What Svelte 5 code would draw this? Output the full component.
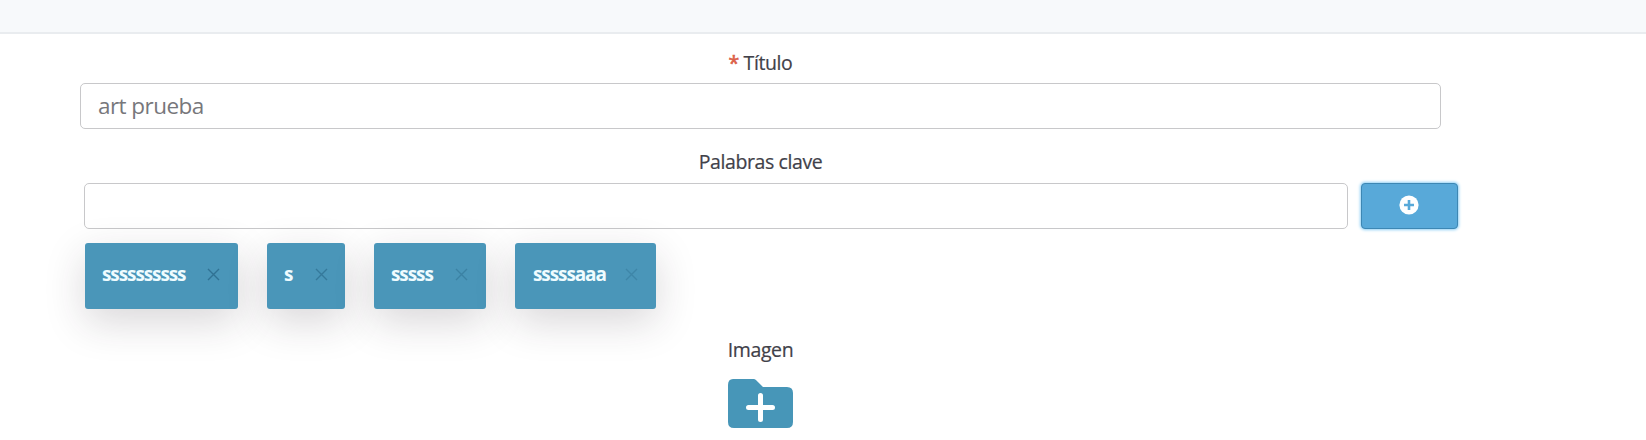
<script>
  const tags = [
    { text: 'ssssssssss', width: 153, left: 17, close: 122, tone: 0.5 },
    { text: 's', width: 78, left: 17, close: 48, tone: 0.4 },
    { text: 'sssss', width: 112, left: 17, close: 81, tone: 0.28 },
    { text: 'sssssaaa', width: 141, left: 18, close: 110, tone: 0.22 }
  ];
</script>

<header class="topbar"></header>
<main class="form">
  <label class="label title" for="title"><span class="required">*</span> Título</label>
  <input id="title" class="field title-field" type="text" value="art prueba" />
  <label class="label keywords" for="keywords">Palabras clave</label>
  <div class="row">
    <input id="keywords" class="field keyword-field" type="text" />
    <button class="add" aria-label="Añadir">
      <svg width="20" height="20" viewBox="0 0 20 20">
        <circle cx="10" cy="10" r="9.6" fill="#fff" />
        <path d="M10 5v10M5 10h10" stroke="#58a9d9" stroke-width="2.6" />
      </svg>
    </button>
  </div>
  <div class="tags">
    {#each tags as tag}
      <div class="tag" style="width:{tag.width}px;padding-left:{tag.left}px;padding-right:{tag.width - tag.close - 13}px">
        <span>{tag.text}</span>
        <svg width="13" height="13" viewBox="0 0 13 13" style="opacity:{tag.tone}">
          <path d="M1 1l11 11M12 1L1 12" stroke="#174f70" stroke-width="1.4" />
        </svg>
      </div>
    {/each}
  </div>
  <div class="label image">Imagen</div>
  <svg class="folder" width="65" height="49" viewBox="0 0 65 49">
    <path d="M5 0H25.5Q27 0 28.2 1.2L35 8H59Q65 8 65 14V43Q65 49 59 49H6Q0 49 0 43V6Q0 0 5 0Z" fill="#4796b8" />
    <path d="M32.5 16.5v24M20.5 28.5h24" stroke="#fff" stroke-width="5" stroke-linecap="round" />
  </svg>
</main>

<style>
  :global(body) {
    background: #fff;
    overflow: hidden;
    font-family: "Open Sans", sans-serif;
  }
  .topbar {
    box-sizing: border-box;
    height: 34px;
    background: #f7f9fb;
    border-bottom: 2px solid #e9ecef;
  }
  .form {
    box-sizing: border-box;
    width: 1522px;
    height: 406px;
    padding: 16px 0 0 80px;
    display: flex;
    flex-direction: column;
    align-items: flex-start;
  }
  .label {
    width: 1361px;
    height: 26px;
    line-height: 26px;
    text-align: center;
    font-size: 19.5px;
    letter-spacing: -0.4px;
    color: #414149;
    -webkit-text-stroke: 0.2px #414149;
  }
  .required {
    color: #dc6048;
    -webkit-text-stroke: 0.6px #dc6048;
  }
  .field {
    box-sizing: border-box;
    height: 46px;
    border: 1.5px solid #c8c8ca;
    border-radius: 5px;
    background: #fff;
    padding: 0 17px 2px;
    font: 22.5px "Open Sans", sans-serif;
    letter-spacing: -0.55px;
    color: #77777b;
    outline: none;
  }
  .title-field {
    width: 1361px;
    margin-top: 7px;
  }
  .keywords {
    margin-top: 20px;
  }
  .row {
    display: flex;
    gap: 13px;
    margin: 8px 0 0 4px;
  }
  .keyword-field {
    width: 1264px;
  }
  .add {
    box-sizing: border-box;
    width: 97px;
    height: 46px;
    padding: 0 1px 2px 0;
    border: 1px solid #3d87b4;
    border-radius: 4px;
    background: #58a9d9;
    box-shadow: 0 0 3px 1px #8fd0f5;
    display: flex;
    align-items: center;
    justify-content: center;
  }
  .tags {
    display: flex;
    gap: 29px;
    margin: 14px 0 0 5px;
  }
  .tag {
    box-sizing: border-box;
    height: 66px;
    border-radius: 3px;
    background: #4a96b9;
    box-shadow: 0 13px 40px rgba(45, 35, 45, 0.18);
    display: flex;
    align-items: center;
    justify-content: space-between;
    color: #effcff;
    font-size: 19px;
    letter-spacing: -1.1px;
    font-weight: 700;
  }
  .tag span {
    margin-top: -4px;
  }
  .tag svg {
    display: block;
    margin-top: -3px;
  }
  .image {
    margin-top: 28px;
  }
  .folder {
    margin: 16px 0 0 648px;
  }
</style>
